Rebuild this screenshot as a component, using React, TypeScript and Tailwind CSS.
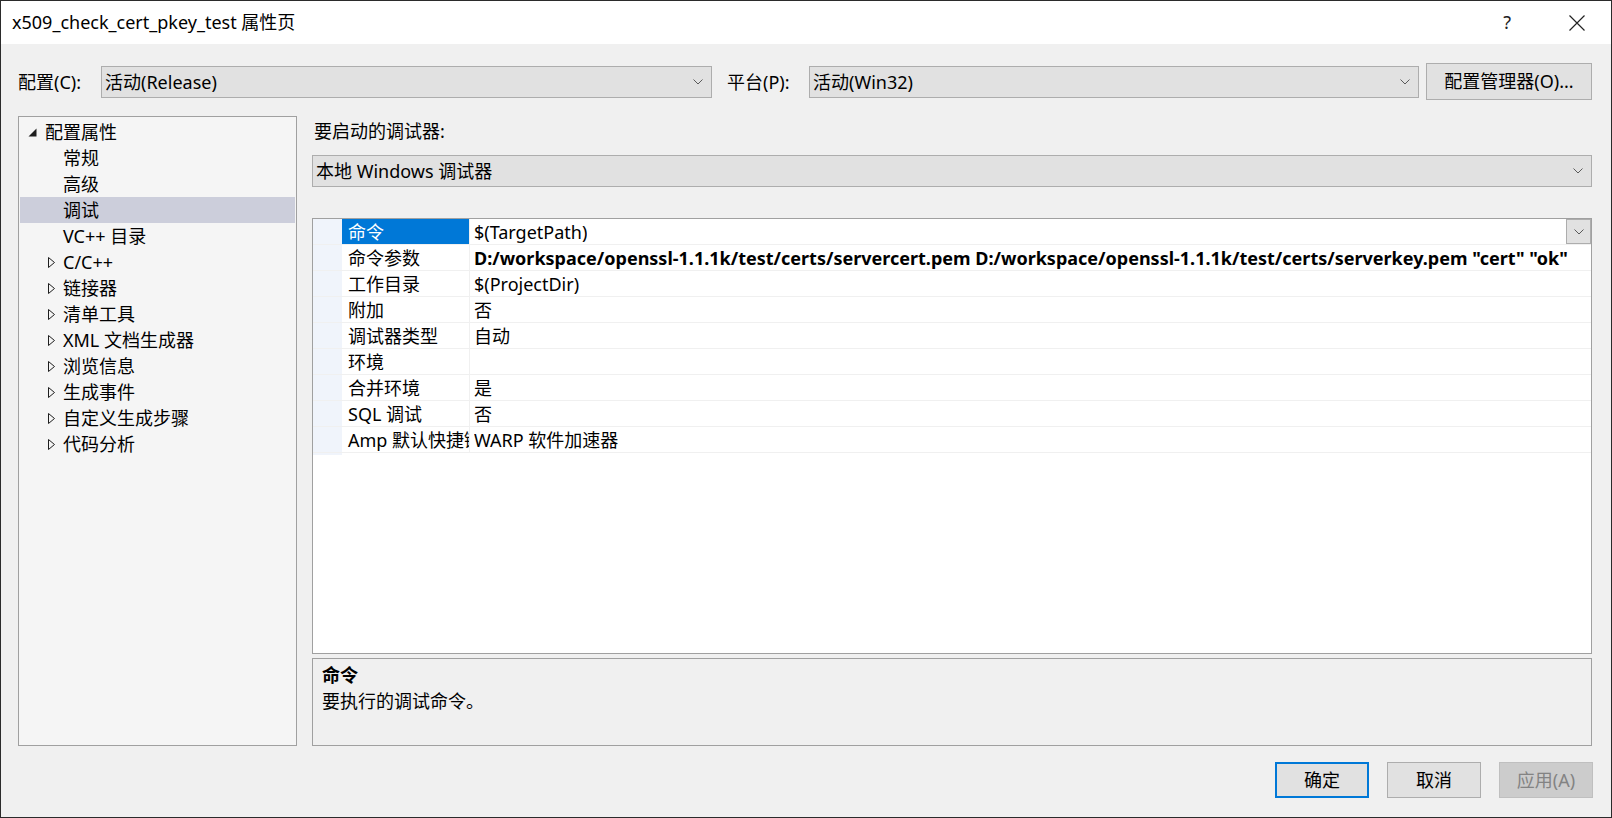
const font = { fontFamily: '"Noto Sans", "Noto Sans CJK SC", sans-serif' };

function Chevron({ className = "" }: { className?: string }) {
  return (
    <svg width="10" height="6" viewBox="0 0 10 6" className={className}>
      <path d="M0.5 0.5 L5 5 L9.5 0.5" fill="none" stroke="#5a5a5a" strokeWidth="1" />
    </svg>
  );
}

function Combo({ text, className = "" }: { text: string; className?: string }) {
  return (
    <div
      className={
        "flex h-[32px] items-center justify-between border border-[#adadad] bg-[#e1e1e1] pl-[3px] pr-[8px] text-[18px] " +
        className
      }
    >
      <span className="pt-[1px]">{text}</span>
      <Chevron />
    </div>
  );
}

function Btn({
  text,
  primary,
  disabled,
}: {
  text: string;
  primary?: boolean;
  disabled?: boolean;
}) {
  return (
    <button
      className={
        "flex h-[36px] w-[94px] items-center justify-center text-[18px] " +
        (primary
          ? "border-2 border-[#0078d7] bg-[#e1e1e1] text-black"
          : disabled
            ? "border border-[#bfbfbf] bg-[#cccccc] text-[#838383]"
            : "border border-[#adadad] bg-[#e1e1e1] text-black")
      }
    >
      {text}
    </button>
  );
}

const tree: { label: string; level: number; kind: "open" | "closed" | "leaf"; selected?: boolean }[] = [
  { label: "配置属性", level: 0, kind: "open" },
  { label: "常规", level: 1, kind: "leaf" },
  { label: "高级", level: 1, kind: "leaf" },
  { label: "调试", level: 1, kind: "leaf", selected: true },
  { label: "VC++ 目录", level: 1, kind: "leaf" },
  { label: "C/C++", level: 1, kind: "closed" },
  { label: "链接器", level: 1, kind: "closed" },
  { label: "清单工具", level: 1, kind: "closed" },
  { label: "XML 文档生成器", level: 1, kind: "closed" },
  { label: "浏览信息", level: 1, kind: "closed" },
  { label: "生成事件", level: 1, kind: "closed" },
  { label: "自定义生成步骤", level: 1, kind: "closed" },
  { label: "代码分析", level: 1, kind: "closed" },
];

const props: { name: string; value: string; bold?: boolean }[] = [
  { name: "命令", value: "$(TargetPath)" },
  {
    name: "命令参数",
    value:
      'D:/workspace/openssl-1.1.1k/test/certs/servercert.pem D:/workspace/openssl-1.1.1k/test/certs/serverkey.pem "cert" "ok"',
    bold: true,
  },
  { name: "工作目录", value: "$(ProjectDir)" },
  { name: "附加", value: "否" },
  { name: "调试器类型", value: "自动" },
  { name: "环境", value: "" },
  { name: "合并环境", value: "是" },
  { name: "SQL 调试", value: "否" },
  { name: "Amp 默认快捷键", value: "WARP 软件加速器" },
];

export default function App() {
  return (
    <div
      style={font}
      className="flex h-[818px] w-[1612px] flex-col border border-[#2b2b2b] bg-[#f0f0f0] text-black"
    >
      {/* title bar */}
      <div className="flex h-[43px] shrink-0 items-center bg-white pl-[11px]">
        <span className="text-[18px]">x509_check_cert_pkey_test 属性页</span>
        <div className="ml-auto flex items-center">
          <span className="mr-[58px] text-[18px] text-[#222]">?</span>
          <svg width="16" height="16" viewBox="0 0 16 16" className="mr-[26px]">
            <path d="M0.5 0.5 L15.5 15.5 M15.5 0.5 L0.5 15.5" stroke="#222" strokeWidth="1.2" />
          </svg>
        </div>
      </div>

      {/* config row */}
      <div className="mt-[19px] flex h-[37px] shrink-0 items-center pl-[17px]">
        <span className="w-[83px] pt-[1px] text-[18px]">配置(C):</span>
        <Combo text="活动(Release)" className="w-[611px]" />
        <span className="ml-[15px] w-[82px] pt-[1px] text-[18px]">平台(P):</span>
        <Combo text="活动(Win32)" className="w-[610px]" />
        <button className="ml-[7px] flex h-[37px] w-[166px] items-center justify-center border border-[#adadad] bg-[#e1e1e1] text-[18px]">
          配置管理器(O)...
        </button>
      </div>

      {/* main area */}
      <div className="mt-[16px] flex h-[630px] shrink-0 pl-[17px]">
        {/* tree */}
        <div className="h-full w-[279px] border border-[#a0a0a0] bg-[#f5f5f5] px-[1px] pt-[2px]">
          {tree.map((t) => (
            <div
              key={t.label}
              className={
                "flex h-[26px] items-center text-[18px] " + (t.selected ? "bg-[#cccedb]" : "")
              }
            >
              {t.level === 0 ? (
                <>
                  <svg width="9" height="9" viewBox="0 0 9 9" className="ml-[8px] mr-[8px]">
                    <path d="M8.5 0.5 L8.5 8.5 L0.5 8.5 Z" fill="#1e1e1e" />
                  </svg>
                  <span>{t.label}</span>
                </>
              ) : (
                <>
                  <span className="ml-[28px] flex w-[15px] items-center">
                    {t.kind === "closed" && (
                      <svg width="7" height="11" viewBox="0 0 7 11">
                        <path d="M0.5 0.5 L6.5 5.5 L0.5 10.5 Z" fill="none" stroke="#1e1e1e" strokeWidth="1" />
                      </svg>
                    )}
                  </span>
                  <span>{t.label}</span>
                </>
              )}
            </div>
          ))}
        </div>

        {/* right column */}
        <div className="ml-[15px] flex w-[1280px] flex-col">
          <div className="mt-[2px] h-[26px] pl-[2px] text-[18px]">要启动的调试器:</div>
          <Combo text="本地 Windows 调试器" className="mt-[11px] w-full" />

          {/* property grid */}
          <div className="mt-[31px] h-[436px] overflow-hidden border border-[#a0a0a0] bg-white">
            {props.map((p, i) => (
              <div key={p.name} className="flex h-[26px] border-b border-[#f0f0f0] text-[18px]">
                <div className="w-[29px] shrink-0 bg-[#f0f4fb]" />
                <div
                  className={
                    "w-[128px] shrink-0 overflow-hidden whitespace-nowrap border-r border-[#f0f0f0] pl-[6px] pt-[2px] leading-[23px] " +
                    (i === 0 ? "bg-[#0078d7] text-white" : "")
                  }
                >
                  {p.name}
                </div>
                <div
                  className={
                    "flex min-w-0 flex-1 items-center justify-between whitespace-nowrap pl-[4px] " +
                    (p.bold ? "font-bold" : "")
                  }
                >
                  <span className="overflow-hidden pt-[2px] leading-[23px]">{p.value}</span>
                  {i === 0 && (
                    <div className="flex h-[25px] w-[25px] shrink-0 items-center justify-center border border-[#adadad] bg-[#e1e1e1]">
                      <Chevron />
                    </div>
                  )}
                </div>
              </div>
            ))}
            <div className="flex h-[2px]">
              <div className="w-[29px] bg-[#f0f4fb]" />
            </div>
          </div>

          {/* description */}
          <div className="mt-[4px] h-[88px] border border-[#a0a0a0] bg-[#f0f0f0] pl-[9px] pt-[3px]">
            <div className="text-[18px] font-bold leading-[26px]">命令</div>
            <div className="text-[18px] leading-[26px]">要执行的调试命令。</div>
          </div>
        </div>
      </div>

      {/* buttons */}
      <div className="mt-[16px] flex justify-end gap-[18px] pr-[18px]">
        <Btn text="确定" primary />
        <Btn text="取消" />
        <Btn text="应用(A)" disabled />
      </div>
    </div>
  );
}
